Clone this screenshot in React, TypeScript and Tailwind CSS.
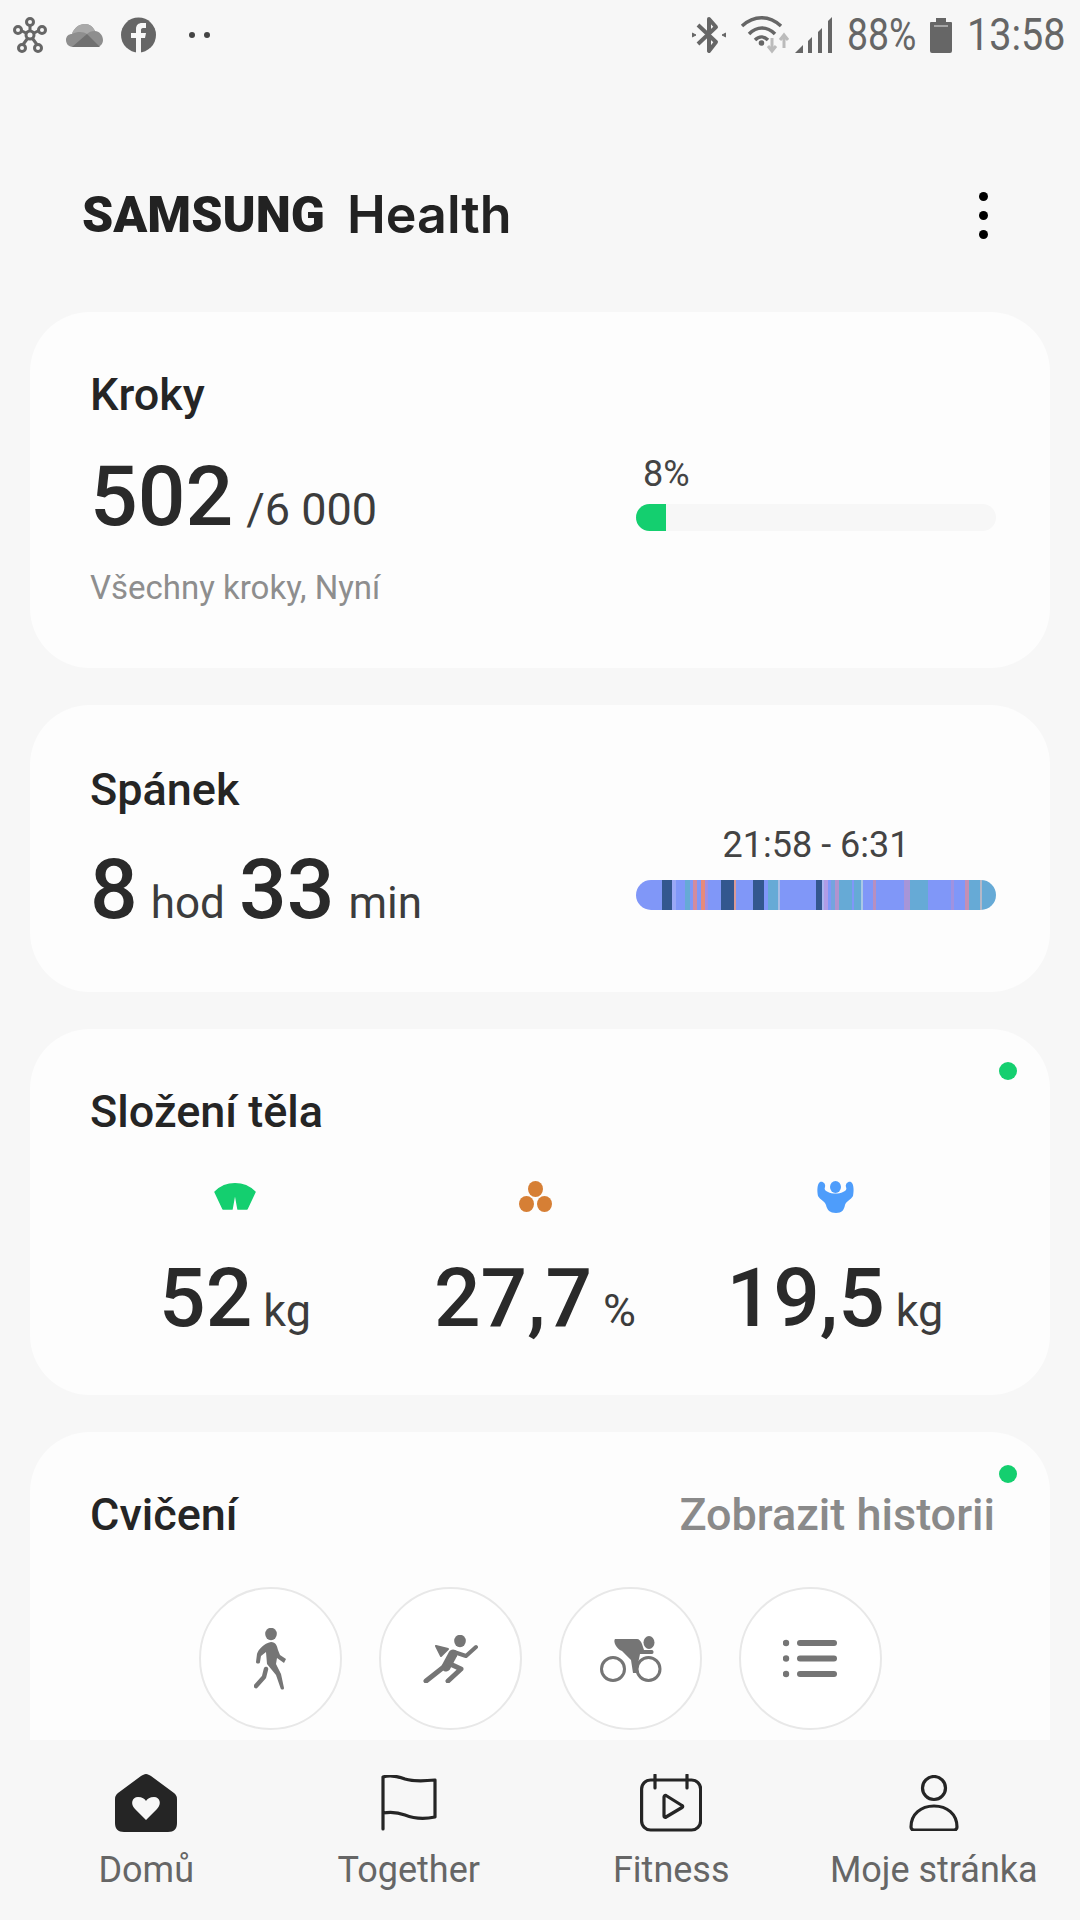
const SANS = "font-['Roboto','Liberation_Sans',sans-serif]";

const SLEEP: [number, string][] = [
  [77, '#8097f8'], [32, '#33578f'], [11, '#9aa8f6'], [27, '#8097f8'], [15, '#66aad6'], [8, '#8097f8'], [12, '#d28b9f'], [13, '#8097f8'], [12, '#e78a7a'], [10, '#a28fe0'],
  [38, '#8097f8'], [39, '#33578f'], [6, '#d99a98'], [50, '#8097f8'], [34, '#33578f'], [13, '#8097f8'], [30, '#66aad6'], [5, '#a9bde6'], [107, '#8097f8'], [18, '#33578f'],
  [7, '#a9b4f0'], [10, '#b09ce6'], [10, '#8097f8'], [13, '#74a4de'], [10, '#b093cf'], [40, '#66aad6'], [5, '#8097f8'], [22, '#66aad6'], [6, '#a9c8e6'], [29, '#8097f8'],
  [11, '#b88fc0'], [82, '#8097f8'], [18, '#a795d8'], [54, '#66aad6'], [70, '#8097f8'], [8, '#a092e0'], [33, '#8097f8'], [12, '#c48fb4'], [35, '#66aad6'], [6, '#b4b8c8'], [41, '#66aad6'],
];

function StatusLeft() {
  return (
    <div className="flex items-center">
      <svg width="34" height="36" viewBox="0 0 34 36" fill="none" stroke="#666" strokeWidth="3" className="ml-[13px]">
        <path d="M17 18V8M17 18L7 13M17 18L27 13M17 18L9 29M17 18L25 29" />
        <circle cx="17" cy="5" r="3.5" fill="#f7f7f7" />
        <circle cx="5" cy="13" r="3.5" fill="#f7f7f7" />
        <circle cx="29" cy="13" r="3.5" fill="#f7f7f7" />
        <circle cx="9" cy="31" r="3.5" fill="#f7f7f7" />
        <circle cx="25" cy="31" r="3.5" fill="#f7f7f7" />
        <circle cx="17" cy="18" r="4" fill="#f7f7f7" />
      </svg>
      <svg width="37" height="25" viewBox="0 0 37 25" className="ml-[19px]">
        <path d="M7 24C2 24 0 20 0 17C0 13 3 11 6 11C8 5 13 1 19 1C24 1 27 4 29 8C33 8 37 12 37 17C37 21 34 24 31 24Z" fill="#8e8e8e" />
        <path d="M6 11C8 5 13 1 19 1C24 1 27 4 29 8C25 8 23 9 21 11C18 9 12 8 6 11Z" fill="#a9a9a9" />
        <path d="M6 24L21 11L34 24Z" fill="#707070" />
      </svg>
      <svg width="35" height="36" viewBox="0 0 35 36" className="ml-[18px]">
        <circle cx="17.5" cy="18" r="17.5" fill="#666" />
        <path d="M15 36V21H10V16H15V12C15 8 17.5 6 21 6H25V11H22C20.5 11 20 12 20 13V16H25L24 21H20V36Z" fill="#f7f7f7" />
      </svg>
      <div className="ml-[33px] flex gap-[9px]">
        <div className="h-[6px] w-[6px] rounded-full bg-[#444]" />
        <div className="h-[6px] w-[6px] rounded-full bg-[#444]" />
      </div>
    </div>
  );
}

function StatusRight() {
  return (
    <div className="flex items-center">
      <svg width="34" height="38" viewBox="0 0 34 38" fill="none" stroke="#666" strokeWidth="4">
        <path d="M6 9L24 26L17 35V3L24 11L6 28" strokeLinejoin="round" />
        <path d="M0 17L4 19L0 21ZM34 17L30 19L34 21Z" fill="#666" strokeWidth="1" />
      </svg>
      <svg width="50" height="38" viewBox="0 0 50 38" fill="none" className="ml-[14px]">
        <path d="M2 10C14 -1 29 -1 41 10" stroke="#666" strokeWidth="3.5" />
        <path d="M9 18C17 10 27 10 35 18" stroke="#666" strokeWidth="3.5" />
        <path d="M15 24C19 20 24 20 28 24" stroke="#666" strokeWidth="3.5" />
        <circle cx="21.5" cy="27" r="2.8" fill="#666" />
        <path d="M32 22V34M28 30L32 35L36 30" stroke="#bbb" strokeWidth="3" />
        <path d="M44 32V20M40 24L44 19L48 24" stroke="#bbb" strokeWidth="3" />
      </svg>
      <svg width="37" height="36" viewBox="0 0 37 36" fill="#666" className="ml-[5px]">
        <path d="M0 36L8 28V36Z" /><path d="M13 24L17 20V36H13Z" /><path d="M23 15L27 11V36H23Z" /><path d="M33 4L37 0V36H33Z" />
      </svg>
      <span className={`${SANS} ml-[15px] origin-left text-[45px] leading-[52px] text-[#666] inline-block w-[70px] scale-x-[.83] whitespace-nowrap`}>88%</span>
      <svg width="24" height="36" viewBox="0 0 24 36" className="ml-[12px]">
        <path d="M1 6Q1 5 2 5H7V1H17V5H22Q23 5 23 6V34Q23 36 21 36H3Q1 36 1 34Z" fill="#666" />
        <path d="M5 9H19" stroke="#bbb" strokeWidth="1.5" />
      </svg>
      <span className={`${SANS} ml-[14px] mr-[18px] origin-left text-[45px] leading-[52px] text-[#666] inline-block w-[95px] scale-x-[.88] whitespace-nowrap`}>13:58</span>
    </div>
  );
}

function Unit({ big, unit, gap }: { big: string; unit: string; gap: string }) {
  return (
    <>
      <span className="text-[82px] font-medium leading-[90px] text-[#2a2a2a]">{big}</span>
      <span className={`${gap} text-[45px] leading-[90px] text-[#3c3c3c]`}>{unit}</span>
    </>
  );
}

function RoundBtn({ children }: { children: React.ReactNode }) {
  return (
    <div className="flex h-[143px] w-[143px] items-center justify-center rounded-full border-2 border-[#e8e8e8] bg-white">
      {children}
    </div>
  );
}

function NavItem({ label, children }: { label: string; children: React.ReactNode }) {
  return (
    <div className="flex flex-col items-center">
      <div className="flex h-[58px] items-center justify-center">{children}</div>
      <div className="mt-[16px] whitespace-nowrap text-[36px] leading-[44px] text-[#666]">{label}</div>
    </div>
  );
}

export default function App() {
  return (
    <div className={`${SANS} flex h-[1920px] w-[1080px] flex-col overflow-hidden bg-[#f7f7f7]`}>
      <div className="flex h-[70px] shrink-0 items-center justify-between">
        <StatusLeft />
        <StatusRight />
      </div>

      <header className="flex h-[242px] shrink-0 items-center pl-[82px] pr-[92px] pt-[48px]">
        <span className="w-[232px] whitespace-nowrap text-[50px] font-black leading-none text-[#222]">SAMSUNG</span>
        <span className="ml-[33px] font-['Inter',sans-serif] text-[52px] font-semibold leading-none text-[#222]">Health</span>
        <div className="ml-auto flex flex-col gap-[10px]">
          <div className="h-[9px] w-[9px] rounded-full bg-black" />
          <div className="h-[9px] w-[9px] rounded-full bg-black" />
          <div className="h-[9px] w-[9px] rounded-full bg-black" />
        </div>
      </header>

      <main className="flex min-h-0 flex-1 flex-col gap-[37px] overflow-hidden px-[30px]">
        <section className="h-[356px] shrink-0 rounded-[60px] bg-[#fdfdfd] pl-[60px] pr-[54px] pt-[55px]">
          <h2 className="text-[45px] font-medium leading-[56px] text-[#252525]">Kroky</h2>
          <div className="mt-[29px] flex justify-between">
            <div>
              <div className="flex items-baseline">
                <span className="text-[84px] font-medium leading-[90px] text-[#2a2a2a]">502</span>
                <span className="ml-[13px] text-[45px] leading-[90px] text-[#3c3c3c]">/6 000</span>
              </div>
              <div className="mt-[11px] text-[33px] leading-[44px] text-[#8e8e8e]">Všechny kroky, Nyní</div>
            </div>
            <div className="w-[360px]">
              <div className="pl-[7px] text-[36px] leading-[44px] text-[#444]">8%</div>
              <div className="mt-[8px] h-[27px] overflow-hidden rounded-full bg-[#f7f7f7]">
                <div className="h-full w-[30px] bg-[#14cf6f]" />
              </div>
            </div>
          </div>
        </section>

        <section className="h-[287px] shrink-0 rounded-[60px] bg-[#fdfdfd] pl-[60px] pr-[54px] pt-[57px]">
          <h2 className="text-[45px] font-medium leading-[56px] text-[#252525]">Spánek</h2>
          <div className="mt-[5px] flex justify-between">
            <div className="flex items-baseline pt-[22px]">
              <span className="text-[84px] font-medium leading-[90px] text-[#2a2a2a]">8</span>
              <span className="ml-[13px] text-[44px] leading-[90px] text-[#3c3c3c]">hod</span>
              <span className="ml-[14px] text-[84px] font-medium leading-[90px] text-[#2a2a2a]">33</span>
              <span className="ml-[14px] text-[44px] leading-[90px] text-[#3c3c3c]">min</span>
            </div>
            <div className="w-[360px]">
              <div className="text-center text-[36px] leading-[44px] text-[#444]">21:58 - 6:31</div>
              <div className="mt-[13px] flex h-[30px] overflow-hidden rounded-full">
                {SLEEP.map(([w, c], i) => (
                  <div key={i} style={{ flexGrow: w, flexBasis: 0, backgroundColor: c }} />
                ))}
              </div>
            </div>
          </div>
        </section>

        <section className="relative h-[366px] shrink-0 rounded-[60px] bg-[#fdfdfd] pt-[55px]">
          <div className="absolute right-[33px] top-[33px] h-[18px] w-[18px] rounded-full bg-[#14cf6f]" />
          <h2 className="pl-[60px] text-[45px] font-medium leading-[56px] text-[#252525]">Složení těla</h2>
          <div className="mt-[41px] grid grid-cols-3 pl-[55px] pr-[65px]">
            <div className="flex flex-col items-center">
              <svg width="42" height="32" viewBox="0 0 42 32" className="h-[32px]">
                <path d="M1 11C12 0 30 0 41 11L33 28L24 28L21.5 14L20.5 14L18 28L9 28Z" fill="#14cf6f" stroke="#14cf6f" strokeWidth="1.5" strokeLinejoin="round" />
              </svg>
              <div className="mt-[40px] flex items-baseline"><Unit big="52" unit="kg" gap="ml-[11px]" /></div>
            </div>
            <div className="flex flex-col items-center">
              <svg width="33" height="32" viewBox="0 0 33 32" className="h-[32px]">
                <ellipse cx="16.5" cy="8" rx="7.5" ry="8" fill="#d67f35" />
                <ellipse cx="7.5" cy="23" rx="7.5" ry="8" fill="#d67f35" />
                <ellipse cx="25.5" cy="23" rx="7.5" ry="8" fill="#d67f35" />
              </svg>
              <div className="mt-[40px] flex items-baseline"><Unit big="27,7" unit="%" gap="ml-[11px]" /></div>
            </div>
            <div className="flex flex-col items-center">
              <svg width="37" height="32" viewBox="0 0 37 32" className="h-[32px]">
                <ellipse cx="18.5" cy="6" rx="5.5" ry="6" fill="#4e9dfb" />
                <path d="M3 1C6 0 9 3 8 6C7 8 8 10 11 11C15 13 22 13 26 11C29 10 30 8 29 6C28 3 31 0 34 1C37 3 37 10 36 15C34 19 29 20 28 24C27 29 25 32 19 32C13 32 10 29 9 24C8 20 3 19 1 15C0 10 0 3 3 1Z" fill="#4e9dfb" />
              </svg>
              <div className="mt-[40px] flex items-baseline"><Unit big="19,5" unit="kg" gap="ml-[11px]" /></div>
            </div>
          </div>
        </section>

        <section className="relative h-[400px] shrink-0 rounded-t-[60px] bg-[#fdfdfd] pt-[55px]">
          <div className="absolute right-[33px] top-[33px] h-[18px] w-[18px] rounded-full bg-[#14cf6f]" />
          <div className="flex items-center justify-between pl-[60px] pr-[55px]">
            <h2 className="text-[45px] font-medium leading-[56px] text-[#252525]">Cvičení</h2>
            <span className="text-[45px] font-medium leading-[56px] text-[#8a8a8a]">Zobrazit historii</span>
          </div>
          <div className="mt-[44px] flex justify-center gap-[37px]">
            <RoundBtn>
              <svg width="33" height="62" viewBox="0 0 33 62" fill="#757575">
                <ellipse cx="17" cy="6" rx="5.8" ry="6.2" />
                <path d="M17 14C22 14 23 18 24 22L26 27L32 31L30 35L23 30L22 36L27 46L30 60C30 62 27 62 26.500 60L22 47L13 36L12 24L7 28L6 34C6 36 2 36 2 34L3 26C4 22 10 15 17 14Z" />
                <path d="M12 41L10 49L2 58" fill="none" stroke="#757575" strokeWidth="4.5" strokeLinecap="round" strokeLinejoin="round" />
              </svg>
            </RoundBtn>
            <RoundBtn>
              <svg width="55" height="48" viewBox="0 0 55 48" fill="none" stroke="#757575" strokeLinecap="round" strokeLinejoin="round">
                <ellipse cx="37" cy="6" rx="5.8" ry="6.2" fill="#757575" stroke="none" />
                <path d="M13 11L25 14L18 21Z" fill="#757575" strokeWidth="2" />
                <path d="M30 19L23 32" strokeWidth="9" />
                <path d="M22 31L3 46" strokeWidth="5" />
                <path d="M25 28L38 34L25 46" strokeWidth="5" />
                <path d="M31 17L43 21L53 12" strokeWidth="4" />
              </svg>
            </RoundBtn>
            <RoundBtn>
              <svg width="64" height="46" viewBox="0 0 64 46" fill="none" stroke="#757575">
                <circle cx="15" cy="33" r="11.5" strokeWidth="3" />
                <circle cx="50.500" cy="33" r="11.5" strokeWidth="3" />
                <ellipse cx="51" cy="6.500" rx="5.5" ry="6.500" fill="#757575" stroke="none" />
                <path d="M17 3H39C41 3 43 5 44 8L46 14H54C56 14 56 18 54 18H42L38 37L35 37L33 24L24 15C18 13 15 5 17 3Z" fill="#757575" stroke="none" />
              </svg>
            </RoundBtn>
            <RoundBtn>
              <svg width="54" height="39" viewBox="0 0 54 39" fill="#757575">
                <circle cx="3" cy="4" r="3.2" /><circle cx="3" cy="19.5" r="3.2" /><circle cx="3" cy="35" r="3.2" />
                <rect x="14" y="1" width="40" height="6" rx="3" /><rect x="14" y="16.5" width="40" height="6" rx="3" /><rect x="14" y="32" width="40" height="6" rx="3" />
              </svg>
            </RoundBtn>
          </div>
        </section>
      </main>

      <nav className="grid h-[180px] shrink-0 grid-cols-4 bg-[#f7f7f7] px-[15px] pt-[34px]">
        <NavItem label="Domů">
          <svg width="62" height="58" viewBox="0 0 62 58">
            <path d="M31 0C29 0 28 1 26 2L3 19C1 21 0 22 0 25V49C0 55 3 58 9 58H53C59 58 62 55 62 49V25C62 22 61 21 59 19L36 2C34 1 33 0 31 0Z" fill="#252525" />
            <path d="M31 46L20 35C15 30 17 23 23 23C27 23 30 25 31 27C32 25 35 23 39 23C45 23 47 30 42 35Z" fill="#f7f7f7" />
          </svg>
        </NavItem>
        <NavItem label="Together">
          <svg width="56" height="56" viewBox="0 0 56 56" fill="none" stroke="#252525" strokeWidth="3.2" strokeLinecap="round" strokeLinejoin="round">
            <path d="M2 54V2C8 0 16 1 24 4C34 7 44 6 54 5V42C44 44 34 44 24 40C16 37 8 37 2 38" />
          </svg>
        </NavItem>
        <NavItem label="Fitness">
          <svg width="62" height="58" viewBox="0 0 62 58" fill="none" stroke="#252525" strokeWidth="3.2" strokeLinecap="round" strokeLinejoin="round">
            <rect x="1.6" y="6" width="59" height="50" rx="9" />
            <path d="M15 1V14M47 1V14" />
            <path d="M24 23V42C24 43 25 44 26 43L42 33.500C43 33 43 32 42 31.500L26 21.500C25 21 24 22 24 23Z" />
          </svg>
        </NavItem>
        <NavItem label="Moje stránka">
          <svg width="50" height="56" viewBox="0 0 50 56" fill="none" stroke="#252525" strokeWidth="3.2" strokeLinejoin="round">
            <circle cx="25" cy="13" r="11.5" />
            <path d="M2 52C2 39 12 31 25 31C38 31 48 39 48 52C48 54 47 55 45 55H5C3 55 2 54 2 52Z" />
          </svg>
        </NavItem>
      </nav>
    </div>
  );
}
